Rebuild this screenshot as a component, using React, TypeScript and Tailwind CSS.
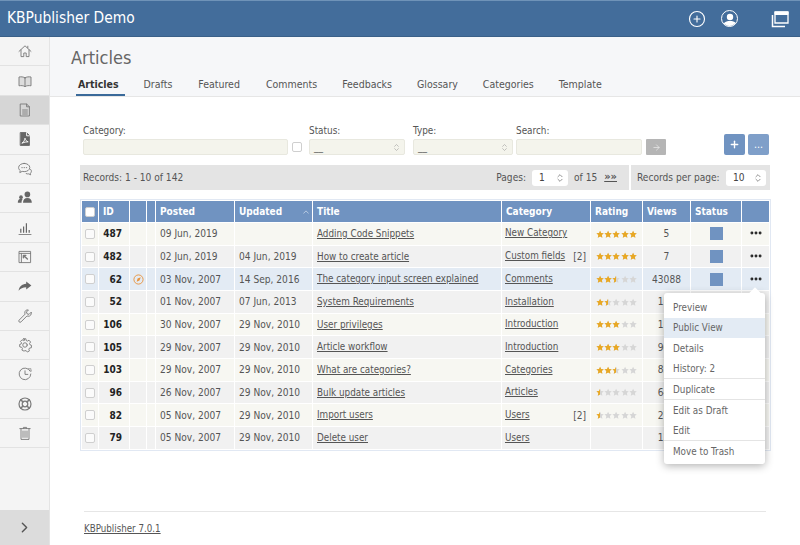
import React from "react";
import { ChevronRight, ChevronsUpDown, CirclePlus, Ellipsis, Plus, ArrowRight } from "lucide-react";

const Ico = ({ children }: { children: React.ReactNode }) => (
  <svg viewBox="0 0 20 20" width="16" height="16" fill="none" stroke="#7a7a7a" strokeWidth="1.150" strokeLinejoin="round" strokeLinecap="round">
    {children}
  </svg>
);

const sideIcons: React.ReactNode[] = [
  <Ico><path d="M2.500 10.500 10 3.500l7.500 7M5 8.500V17h3.500v-4.500h3V17H15V8.500M13.500 4v2" /></Ico>,
  <Ico><path d="M10 6c-2-1.300-5-1.500-7.500-1v11c2.500-.5 5.500-.3 7.500 1 2-1.300 5-1.500 7.500-1V5C15 4.500 12 4.700 10 6Zm0 0v11" fill="#ddd" /></Ico>,
  <Ico><path d="M4.500 2.500h7.500l3.500 3.500v11.500h-11Zm7.500 0V6h3.500M7 10h6M7 12.500h6M7 15h6" /></Ico>,
  <Ico><path d="M4.500 2h7.500l3.500 3.500V18h-11Z" fill="#666" stroke="#666" /><path d="M12 2v4h3.500" stroke="#fff" /><path d="M6.500 15c2-1 3-3.500 3.500-6 .5 2.500 2 4 4 4.500-2.500 0-5 .5-7.500 1.500Z" stroke="#fff" /></Ico>,
  <Ico><path d="M9 3c-3.800 0-7 2.300-7 5.200 0 1.500.8 2.800 2 3.700l-.5 2.600 3-1.500c.8.200 1.600.3 2.500.3 3.800 0 7-2.200 7-5.100S12.800 3 9 3Z" /><path d="M17 10.500c.7.700 1 1.500 1 2.300 0 1-.5 1.800-1.300 2.500l.3 2-2.400-1.200c-1 .2-2.200.1-3.100-.3" /><path d="M6 8.300h.6M8.800 8.300h.6M11.600 8.300h.6" /></Ico>,
  <svg viewBox="0 0 20 20" width="16" height="16" fill="#666"><circle cx="13" cy="5.500" r="3.500" /><path d="M7.500 16c0-4 2-6 5.500-6s5.500 2 5.500 6Z" /><circle cx="5" cy="9" r="2.300" /><path d="M1 16c0-3 1.500-5 4-5 1 0 1.500.3 2 .6-1 1-1.300 2.700-1.300 4.400Z" /></svg>,
  <svg viewBox="0 0 20 20" width="16" height="16" fill="#666"><path d="M4 11h1.500v5H4ZM7.500 8H9v8H7.500ZM11 4h1.500v12H11ZM14.500 12.500H16V16h-1.500ZM2 17.500h16v1H2Z" /></svg>,
  <Ico><path d="M3 3h14v14H3Z" /><path d="M5.500 5.500H17M3 5.500h2.500V17" /><path d="M8 8l5 4.500M8 8h3M8 8v3" strokeWidth="1.800" /></Ico>,
  <svg viewBox="0 0 20 20" width="16" height="16" fill="#666"><path d="M11.500 4.500 18 9.500l-6.500 5v-3C7.500 11.500 4 13 2 16c.7-5 4-8.200 9.500-8.700Z" /></svg>,
  <Ico><path d="M17.500 5.500 15 8l-2.500-.8L11.800 5l2.500-2.500c-2.500-.8-5 1.200-4.500 4 .1.500.2.800.4 1.100l-7.500 7.500a1.600 1.600 0 0 0 2.300 2.300l7.500-7.500c.3.200.7.300 1.100.4 2.800.4 4.900-2 4.300-4.800Z" /></Ico>,
  <Ico><circle cx="10" cy="10" r="2.800" /><path d="M8.500 2.500h3l.4 2.200 1.500.7 2-1.100 2 2.300-1.300 1.800.5 1.600 2 .8-.3 3-2.200.3-.9 1.400.8 2.100-2.600 1.500-1.500-1.700h-1.700L9.200 18l-2.700-1.400.7-2.100-1-1.400-2.200-.3-.4-3 2-.8.400-1.600L4.700 6l2-2.300 1.900 1.100 1.400-.7Z" transform="translate(-.4 -.3)" /></Ico>,
  <Ico><path d="M16.500 6.500A7.300 7.300 0 1 0 17.300 10" /><path d="M10 6v4.500h3.500" /><path d="M14.500 3.500h3V6.500" strokeDasharray="1 1.500" /></Ico>,
  <Ico><circle cx="10" cy="10" r="7.500" strokeWidth="1.500" /><circle cx="10" cy="10" r="3.500" strokeWidth="1.500" /><path d="M4.700 4.700l2.800 2.800M15.300 4.700l-2.800 2.800M4.700 15.300l2.800-2.800M15.300 15.300l-2.800-2.800" strokeWidth="2" /></Ico>,
  <Ico><path d="M3.500 4.500h13M8 4.500V3h4v1.500M5 4.500V18h10V4.500M7.500 7.500v8M10 7.500v8M12.500 7.500v8" /></Ico>,
];

const tabs: { t: string; c: string }[] = [
  { t: "Articles", c: "mr-[17px] border-[#3a6a9a] pr-[6px] font-bold text-[#333]" },
  { t: "Drafts", c: "mr-[22px] border-transparent" },
  { t: "Featured", c: "mr-[22px] border-transparent" },
  { t: "Comments", c: "mr-[21px] border-transparent" },
  { t: "Feedbacks", c: "mr-[21px] border-transparent" },
  { t: "Glossary", c: "mr-[21px] border-transparent" },
  { t: "Categories", c: "mr-[21px] border-transparent" },
  { t: "Template", c: "mr-[21px] border-transparent" },
];

type Row = { id: number; posted: string; updated: string; title: string; cat: string; n?: number; rating: number; views: string; status?: boolean; menu?: boolean };
const rows: Row[] = [
  { id: 487, posted: "09 Jun, 2019", updated: "", title: "Adding Code Snippets", cat: "New Category", rating: 5, views: "5", status: true, menu: true },
  { id: 482, posted: "02 Jun, 2019", updated: "04 Jun, 2019", title: "How to create article", cat: "Custom fields", n: 2, rating: 5, views: "7", status: true, menu: true },
  { id: 62, posted: "03 Nov, 2007", updated: "14 Sep, 2016", title: "The category input screen explained", cat: "Comments", rating: 2.5, views: "43088", status: true, menu: true },
  { id: 52, posted: "01 Nov, 2007", updated: "07 Jun, 2013", title: "System Requirements", cat: "Installation", rating: 1.5, views: "152" },
  { id: 106, posted: "30 Nov, 2007", updated: "29 Nov, 2010", title: "User privileges", cat: "Introduction", rating: 3, views: "118" },
  { id: 105, posted: "29 Nov, 2007", updated: "29 Nov, 2010", title: "Article workflow", cat: "Introduction", rating: 3, views: "964" },
  { id: 103, posted: "29 Nov, 2007", updated: "29 Nov, 2010", title: "What are categories?", cat: "Categories", rating: 2.5, views: "837" },
  { id: 96, posted: "26 Nov, 2007", updated: "29 Nov, 2010", title: "Bulk update articles", cat: "Articles", rating: 0.5, views: "645" },
  { id: 82, posted: "05 Nov, 2007", updated: "29 Nov, 2010", title: "Import users", cat: "Users", n: 2, rating: 0.5, views: "271" },
  { id: 79, posted: "05 Nov, 2007", updated: "29 Nov, 2010", title: "Delete user", cat: "Users", rating: 0, views: "126" },
];

const STAR = "M5 .6l1.350 2.900 3.150.4-2.300 2.150.6 3.150L5 7.650 2.200 9.200l.6-3.150L.5 3.900l3.150-.4Z";

const Stars = ({ value }: { value: number }) => (
  <div className="flex">
    {[0, 1, 2, 3, 4].map((i) => {
      const f = Math.max(0, Math.min(1, value - i));
      return (
        <div key={i} className="relative h-[8.500px] w-[8.200px]">
          <svg viewBox="0 0 10 10" className="absolute inset-0 h-full w-full" fill="#d6d6d6"><path d={STAR} /></svg>
          <div className="absolute inset-y-0 left-0 overflow-hidden" style={{ width: `${f * 100}%` }}>
            <svg viewBox="0 0 10 10" className="h-[8.500px] w-[8.200px]" fill="#e9a823"><path d={STAR} /></svg>
          </div>
        </div>
      );
    })}
  </div>
);

const Box = ({ white }: { white?: boolean }) => (
  <div className={`mx-auto h-[10px] w-[10px] rounded-[2px] border border-[#cfcfcf] ${white ? "bg-white" : "bg-[#fbfbfb]"}`} />
);

const FakeSelect = ({ className, value }: { className: string; value: string }) => (
  <div className={`flex items-center justify-between rounded-[3px] bg-white pl-[7px] pr-[3px] text-[#444] ${className}`}>
    <span>{value}</span>
    <ChevronsUpDown size={10} strokeWidth={1.500} color="#555" />
  </div>
);

const Field = ({ label, className, children }: { label: string; className: string; children: React.ReactNode }) => (
  <div className={`flex flex-col ${className}`}>
    <span className="mb-[1px] text-[9.900px] leading-[14px] text-[#555]">{label}</span>
    {children}
  </div>
);

const inputCls = "h-[16px] rounded-[2px] border border-[#e8e8df] bg-[#f4f4ec]";

const Select2 = () => (
  <div className={`${inputCls} flex items-center justify-between pl-[4px] pr-[3px]`}>
    <span className="text-[10px] leading-[14px] text-[#666]">__</span>
    <ChevronsUpDown size={9} strokeWidth={1.500} color="#999" />
  </div>
);

const menu: { t: string; c: string }[] = [
  { t: "Preview", c: "pt-[2px]" },
  { t: "Public View", c: "pt-[2px] bg-[#e3ebf4]" },
  { t: "Details", c: "pt-[2px]" },
  { t: "History: 2", c: "pt-[2px] border-b border-[#e4e4e4]" },
  { t: "Duplicate", c: "pt-[3px] border-b border-[#e4e4e4]" },
  { t: "Edit as Draft", c: "pt-[3px]" },
  { t: "Edit", c: "pt-[3px] border-b border-[#e4e4e4]" },
  { t: "Move to Trash", c: "pt-[3px]" },
];

const th = "bg-[#7093c1] pl-[4px] text-left text-[10px] font-bold text-white";

export default function App() {
  return (
    <div className="relative flex h-[545px] w-[800px] flex-col overflow-hidden bg-white font-['DejaVu_Sans',sans-serif] text-[10.100px] text-[#555] [font-stretch:condensed]">
      <header className="flex h-[37px] shrink-0 items-center border-t border-b border-t-[#6f93b8] border-b-[#3a6088] bg-[#436d9b] pl-[7px] pr-[11px] text-white">
        <span className="pt-[1px] text-[15.400px] leading-none">KBPublisher Demo</span>
        <div className="ml-auto flex items-center">
          <CirclePlus size={18} strokeWidth={1.500} color="#fff" />
          <div className="ml-[15px] flex h-[17px] w-[17px] items-end justify-center overflow-hidden rounded-full border-[1.500px] border-white">
            <svg viewBox="0 0 14 14" className="h-[14px] w-[14px]" fill="#fff"><circle cx="7" cy="5" r="3.200" /><path d="M0 14c0-3.500 3-5 7-5s7 1.500 7 5Z" /></svg>
          </div>
          <svg viewBox="0 0 18 18" className="ml-[33px] h-[18px] w-[18px]" fill="none" stroke="#fff">
            <path d="M4 2h13v11H4Z" strokeWidth="1.300" />
            <path d="M4 2h13v2.500H4Z" fill="#fff" />
            <path d="M1.500 5v11.500H14" strokeWidth="1.500" />
          </svg>
        </div>
      </header>

      <div className="flex min-h-0 flex-1">
        <aside className="flex w-[50px] shrink-0 flex-col border-r border-[#e4e4e4] bg-[#f4f4f4]">
          {sideIcons.map((icon, i) => (
            <div key={i} className={`flex h-[29.400px] shrink-0 items-center justify-center border-b border-[#e2e2e2] ${i === 2 ? "bg-[#d6d6d6]" : ""}`}>
              {icon}
            </div>
          ))}
          <div className="mt-auto flex h-[35px] items-center justify-center bg-[#dcdcdc]">
            <ChevronRight size={17} strokeWidth={2} color="#555" />
          </div>
        </aside>

        <main className="flex min-w-0 flex-1 flex-col">
          <section className="h-[60px] shrink-0 border-b border-[#e6e6e6] bg-[#f6f7f9]">
            <h1 className="pl-[21px] pt-[8px] text-[18px] leading-[26px] text-[#666]">Articles</h1>
            <nav className="mt-[5px] flex pl-[26px]">
              {tabs.map((t) => (
                <span key={t.t} className={`border-b-[2px] px-[2px] pb-[3px] pt-[1px] text-[10.500px] leading-[14px] ${t.c}`}>
                  {t.t}
                </span>
              ))}
            </nav>
          </section>

          <section className="flex items-end pl-[33px] pr-[31px] pt-[27px]">
            <Field label="Category:" className="w-[205px]"><div className={inputCls} /></Field>
            <div className="mb-[3px] ml-[4px] h-[10px] w-[10px] rounded-[2px] border border-[#cfcfcf] bg-white" />
            <Field label="Status:" className="ml-[7px] w-[96px]"><Select2 /></Field>
            <Field label="Type:" className="ml-[8px] w-[100px]"><Select2 /></Field>
            <Field label="Search:" className="ml-[3px] w-[126px]"><div className={inputCls} /></Field>
            <button className="ml-[4px] flex h-[16px] w-[20px] items-center justify-center rounded-[1px] bg-[#b5b5b5]">
              <ArrowRight size={9} color="#e8e8e8" />
            </button>
            <button className="ml-[58px] flex h-[21px] w-[21px] items-center justify-center rounded-[2px] bg-[#7093c1]">
              <Plus size={11} strokeWidth={3} color="#fff" />
            </button>
            <button className="ml-[3px] flex h-[21px] w-[21px] items-center justify-center rounded-[2px] bg-[#7f9fc9] text-[10.500px] leading-none text-white">...</button>
          </section>

          <section className="mx-[30px] mt-[10px] flex h-[25px] shrink-0 gap-[2px]">
            <div className="flex flex-1 items-center bg-[#e4e4e4] pl-[3px] pr-[12px]">
              <span>Records: 1 - 10 of 142</span>
              <span className="ml-auto">Pages:</span>
              <FakeSelect className="ml-[6px] h-[16px] w-[36px]" value="1" />
              <span className="ml-[6px]">of 15</span>
              <span className="ml-[7px] text-[11px] font-bold underline">»»</span>
            </div>
            <div className="flex w-[139px] items-center bg-[#e4e4e4] pl-[6px] pr-[4px]">
              <span className="whitespace-nowrap">Records per page:</span>
              <FakeSelect className="ml-auto h-[16px] w-[40px]" value="10" />
            </div>
          </section>

          <div className="ml-[30px] mt-[9px] w-[691px] border border-[#e1e8f3]">
            <table className="w-[689px] table-fixed border-separate border-spacing-[1px] bg-white text-[10.100px]">
              <colgroup>
                <col className="w-[16px]" />
                <col className="w-[30px]" />
                <col className="w-[16px]" />
                <col className="w-[8px]" />
                <col className="w-[78px]" />
                <col className="w-[77px]" />
                <col className="w-[188px]" />
                <col className="w-[88px]" />
                <col className="w-[51px]" />
                <col className="w-[47px]" />
                <col className="w-[50px]" />
                <col className="w-[27px]" />
              </colgroup>
              <thead>
                <tr className="h-[21px]">
                  <th className="bg-[#7093c1]"><Box white /></th>
                  <th className={th}>ID</th>
                  <th className={th} />
                  <th className={th} />
                  <th className={th}>Posted</th>
                  <th className={th}>
                    <div className="flex items-center justify-between pr-[3px]">
                      <span>Updated</span>
                      <svg viewBox="0 0 8 5" className="h-[4px] w-[6px]" fill="none" stroke="#cfdbec"><path d="M.5 4.500 4 1l3.500 3.500" /></svg>
                    </div>
                  </th>
                  <th className={th}>Title</th>
                  <th className={th}>Category</th>
                  <th className={th}>Rating</th>
                  <th className={th}>Views</th>
                  <th className={th}>Status</th>
                  <th className={th} />
                </tr>
              </thead>
              <tbody>
                {rows.map((r, i) => {
                  const bg = i === 2 ? "bg-[#e3ebf4]" : i % 2 === 0 ? "bg-[#f7f7f2]" : "bg-[#f1f1f1]";
                  const td = `${bg} p-0 whitespace-nowrap`;
                  return (
                    <tr key={r.id} className="h-[21.680px]">
                      <td className={td}><Box /></td>
                      <td className={`${td} pr-[7px] text-right text-[10px] font-bold text-[#222]`}>{r.id}</td>
                      <td className={td}>
                        {i === 2 && (
                          <svg viewBox="0 0 12 12" className="mx-auto h-[11px] w-[11px]" fill="none">
                            <circle cx="6" cy="6" r="5" stroke="#e8923a" strokeWidth="1" />
                            <path d="M8.500 3.500 7 7 4 8.500 5 5Z" fill="#e8923a" />
                          </svg>
                        )}
                      </td>
                      <td className={td} />
                      <td className={`${td} pl-[4px]`}>{r.posted}</td>
                      <td className={`${td} pl-[4px]`}>{r.updated}</td>
                      <td className={`${td} pl-[4px]`}><span className="text-[9.800px] underline">{r.title}</span></td>
                      <td className={`${td} pl-[3px] pr-[4px]`}>
                        <div className="flex justify-between">
                          <span className="text-[9.800px] underline">{r.cat}</span>
                          {r.n && <span>[{r.n}]</span>}
                        </div>
                      </td>
                      <td className={`${td} pl-[5px]`}>{r.rating > 0 && <Stars value={r.rating} />}</td>
                      <td className={`${td} text-center`}>{r.views}</td>
                      <td className={td}>{r.status && <div className="mx-auto h-[13px] w-[13px] bg-[#7093c1]" />}</td>
                      <td className={td}>{r.menu && <Ellipsis size={14} strokeWidth={3} color="#222" className="mx-auto -mt-[1px]" />}</td>
                    </tr>
                  );
                })}
              </tbody>
            </table>
          </div>

          <footer className="mx-[34px] mt-auto mb-[8px] border-t border-[#e6e6e6] pt-[9px]">
            <span className="text-[9.700px] underline">KBPublisher 7.0.1</span>
          </footer>
        </main>
      </div>

      <div className="absolute left-[664px] top-[293px] w-[101px] rounded-[3px] bg-white pb-[3px] pt-[4px] text-[9.800px] text-[#666] shadow-[0_2px_8px_rgba(0,0,0,0.3)]">
        <div className="absolute -top-[4px] right-[6px] h-[8px] w-[8px] rotate-45 bg-white" />
        {menu.map((m) => (
          <div key={m.t} className={`relative flex h-[20.500px] items-center pl-[9px] ${m.c}`}>
            {m.t}
          </div>
        ))}
      </div>
    </div>
  );
}
